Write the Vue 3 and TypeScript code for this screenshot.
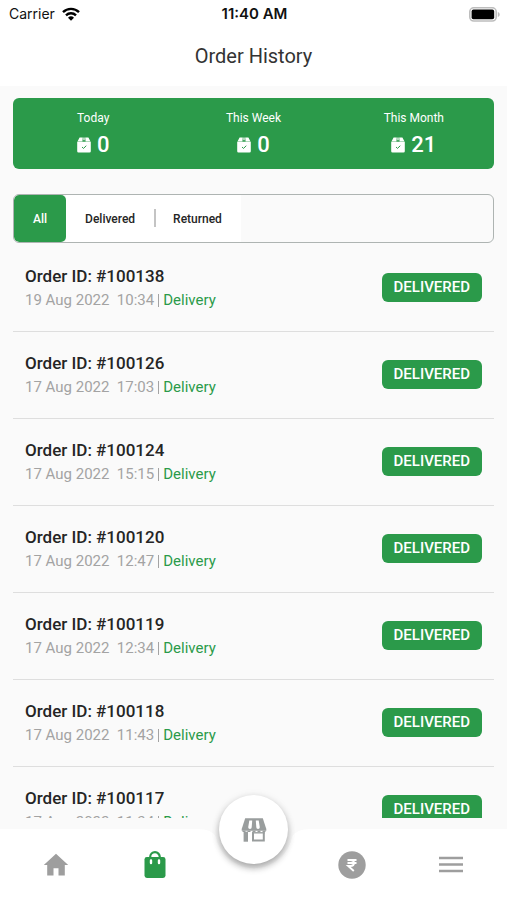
<script setup lang="ts">
import { ref, computed } from 'vue'

type Filter = 'All' | 'Delivered' | 'Returned'

interface Order {
  id: number
  date: string
  time: string
  status: Filter
}

const stats = [
  { label: 'Today', count: 0 },
  { label: 'This Week', count: 0 },
  { label: 'This Month', count: 21 },
]

const filters: Filter[] = ['All', 'Delivered', 'Returned']
const active = ref<Filter>('All')

const orders: Order[] = [
  { id: 100138, date: '19 Aug 2022', time: '10:34', status: 'Delivered' },
  { id: 100126, date: '17 Aug 2022', time: '17:03', status: 'Delivered' },
  { id: 100124, date: '17 Aug 2022', time: '15:15', status: 'Delivered' },
  { id: 100120, date: '17 Aug 2022', time: '12:47', status: 'Delivered' },
  { id: 100119, date: '17 Aug 2022', time: '12:34', status: 'Delivered' },
  { id: 100118, date: '17 Aug 2022', time: '11:43', status: 'Delivered' },
  { id: 100117, date: '17 Aug 2022', time: '11:34', status: 'Delivered' },
]

const visible = computed(() =>
  active.value === 'All' ? orders : orders.filter((o) => o.status === active.value),
)
</script>

<template>
  <div class="screen">
    <header class="top">
      <div class="status">
        <span class="carrier">
          Carrier
          <svg width="18" height="14" viewBox="0 0 18 14" fill="none" stroke="#000" stroke-width="2.4">
            <path d="M1 5.2a11.4 11.4 0 0 1 16 0" />
            <path d="M4 8.3a7.2 7.2 0 0 1 10 0" />
            <path d="M9 13.8 6 10.8a4.3 4.3 0 0 1 6 0z" fill="#000" stroke="none" />
          </svg>
        </span>
        <span class="clock">11:40 AM</span>
        <svg class="battery" width="31" height="15" viewBox="0 0 31 15">
          <rect x="0.8" y="0.8" width="26.4" height="13.2" rx="4" fill="#fff" stroke="#bdbdbd" stroke-width="1.6" />
          <rect x="2.6" y="2.6" width="22.6" height="9.6" rx="1.8" fill="#000" />
          <path d="M28.8 5v5c1.4-.5 1.9-1.5 1.9-2.500S30.200 5.500 28.800 5z" fill="#bdbdbd" />
        </svg>
      </div>
      <h1>Order History</h1>
    </header>

    <main>
      <section class="stats">
        <div v-for="s in stats" :key="s.label" class="stat">
          <span class="label">{{ s.label }}</span>
          <span class="count">
            <svg width="14" height="16" viewBox="0 0 14 16">
              <path d="M2.600.5h3.200l-.4 4H.5zM8.200.5h3.200l2.100 4H8.600z" fill="#fff" />
              <path d="M6.200.5h1.600v2.900l-.8-.5-.8.500z" fill="#fff" opacity=".8" />
              <path d="M.2 4.800h13.600v9.400a1.300 1.300 0 0 1-1.300 1.300h-11A1.300 1.300 0 0 1 .2 14.200z" fill="#fff" />
              <path d="m5 10 1.500 1.400L9.300 8.700" fill="none" stroke="#2b9a4a" stroke-width="1" />
            </svg>
            {{ s.count }}
          </span>
        </div>
      </section>

      <div class="filters">
        <button
          v-for="f in filters"
          :key="f"
          type="button"
          :class="{ on: f === active }"
          :aria-pressed="f === active"
          @click="active = f"
        >{{ f }}</button>
      </div>

      <ul class="orders">
        <li v-for="o in visible" :key="o.id">
          <div class="info">
            <strong>Order ID: #{{ o.id }}</strong>
            <span class="meta">
              <span>{{ o.date }}&nbsp; {{ o.time }}</span>
              <i class="bar"></i>
              <span class="kind">Delivery</span>
            </span>
          </div>
          <span class="badge">DELIVERED</span>
        </li>
      </ul>
    </main>

    <nav>
      <svg class="notch" width="120" height="40" viewBox="0 0 120 40" aria-hidden="true">
        <path d="M4 0Q18 0 21.800 8A39 39 0 0 0 98.200 8Q102 0 116 0z" fill="#fafafa" />
      </svg>
      <button type="button" aria-label="Home">
        <svg width="26" height="24" viewBox="0 0 26 24">
          <path d="M13 .8 25.200 12h-3.400v10.500h-6.300v-7.300h-5v7.300H4.200V12H.8z" fill="#9e9e9e" />
        </svg>
      </button>
      <button type="button" aria-label="Orders">
        <svg width="22" height="28" viewBox="0 0 22 28">
          <path d="M6.200 7.500V6a4.800 4.800 0 0 1 9.600 0v1.500" fill="none" stroke="#2b9a4a" stroke-width="2.200" />
          <rect x=".5" y="6" width="21" height="21" rx="2.400" fill="#2b9a4a" />
          <path d="M7 9.500v2.600M15 9.500v2.600" stroke="#fff" stroke-width="2.400" stroke-linecap="round" />
        </svg>
      </button>
      <span class="slot">
        <button type="button" class="fab" aria-label="Store">
          <svg width="26" height="24" viewBox="0 0 26 24">
            <path d="M4.200.3h17.600l3.500 10.700v1.700H.7V11z" fill="#999d9d" />
            <path d="M8.300 2.600h2.900l-.5 6.600a1.700 1.700 0 0 1-3.500 0zM14.800 2.600h2.900l1.100 6.600a1.700 1.700 0 0 1-3.500 0z" fill="#fff" />
            <path d="M1.500 12.700h3v1.200h-3zM6.500 12.700h3v1.200h-3zM11.500 12.700h3v1.200h-3zM16.500 12.700h3v1.200h-3zM21.500 12.700h3v1.200h-3z" fill="#999d9d" />
            <path d="M2.600 13.700H7V23.700H2.600z" fill="#999d9d" />
            <path d="M12 14.200v8.400h10.800v-8.400" fill="none" stroke="#999d9d" stroke-width="2" />
            <path d="M11 14.800h12.800" stroke="#999d9d" stroke-width="1.400" />
          </svg>
        </button>
      </span>
      <button type="button" aria-label="Earnings">
        <svg width="28" height="28" viewBox="0 0 28 28">
          <circle cx="14" cy="14" r="13.700" fill="#9e9e9e" />
          <path d="M9.500 9h9M9.500 12h9M10 9h2.500c4.600 0 4.600 6 0 6h-2.300l5.600 5" fill="none" stroke="#fff" stroke-width="1.900" />
        </svg>
      </button>
      <button type="button" aria-label="Menu">
        <svg width="24" height="17" viewBox="0 0 24 17">
          <path d="M0 2h24M0 8.500h24M0 15h24" stroke="#9e9e9e" stroke-width="2.400" />
        </svg>
      </button>
    </nav>
  </div>
</template>

<style>
body {
  margin: 0;
}
</style>

<style scoped>
.screen {
  height: 100vh;
  display: flex;
  flex-direction: column;
  overflow: hidden;
  background: #fafafa;
  color: #252525;
  font-family: Roboto, "Liberation Sans", sans-serif;
}
svg {
  display: block;
  flex: none;
}
button {
  border: 0;
  padding: 0;
  background: none;
  font: inherit;
  color: inherit;
}
.top {
  flex: none;
  height: 86px;
  background: #fff;
}
.status {
  display: grid;
  grid-template-columns: 1fr auto 1fr;
  align-items: center;
  height: 28px;
  padding: 0 7px 0 9px;
  color: #111;
  font: 14px/20px Inter, sans-serif;
}
.carrier {
  display: flex;
  align-items: center;
  gap: 7px;
}
.clock {
  font-size: 15px;
  font-weight: 600;
}
.battery {
  justify-self: end;
}
h1 {
  margin: 0;
  text-align: center;
  font-size: 20px;
  line-height: 56px;
  font-weight: 400;
  color: #333;
}
main {
  flex: 1;
  min-height: 0;
  display: flex;
  flex-direction: column;
  padding: 12px 13px 11px;
}
.stats {
  flex: none;
  display: grid;
  grid-template-columns: repeat(3, 1fr);
  height: 71px;
  border-radius: 6px;
  background: #2b9a4a;
  color: #fff;
}
.stat {
  display: flex;
  flex-direction: column;
  align-items: center;
  padding-top: 12px;
}
.label {
  font-size: 12px;
  line-height: 16px;
}
.count {
  display: flex;
  align-items: center;
  gap: 6px;
  margin-top: 5px;
  font-size: 22px;
  line-height: 28px;
  font-weight: 500;
}
.filters {
  flex: none;
  display: flex;
  height: 47px;
  margin-top: 25px;
  border: 1px solid #aeb4b2;
  border-radius: 6px;
  overflow: hidden;
  font-size: 12px;
  font-weight: 500;
}
.filters button {
  position: relative;
  padding: 0 19px;
  background: #fff;
}
.filters button + button + button::before {
  content: "";
  position: absolute;
  left: 0;
  top: 14px;
  width: 2px;
  height: 18px;
  background: #c4c4c4;
}
.filters .on {
  border-radius: 5px;
  background: #2b9a4a;
  color: #fff;
}
.orders {
  flex: 1;
  min-height: 0;
  margin: 2px 0 0;
  padding: 0;
  overflow: hidden;
  list-style: none;
}
li {
  box-sizing: border-box;
  height: 87px;
  display: flex;
  align-items: center;
  justify-content: space-between;
  padding: 0 12px 2px;
  border-bottom: 1px solid #dedede;
}
.info {
  display: flex;
  flex-direction: column;
  gap: 2px;
}
strong {
  font-size: 17px;
  line-height: 24px;
  font-weight: 500;
}
.meta {
  display: flex;
  align-items: center;
  gap: 4px;
  font-size: 15px;
  line-height: 20px;
  color: #a3a3a3;
}
.bar {
  width: 1px;
  height: 13px;
  background: #a3a3a3;
}
.kind {
  color: #2b9a4a;
}
.badge {
  padding: 0 12px;
  border-radius: 6px;
  background: #2b9a4a;
  color: #fff;
  font-size: 15px;
  line-height: 29px;
  font-weight: 500;
}
nav {
  position: relative;
  flex: none;
  display: grid;
  grid-template-columns: repeat(5, 1fr);
  height: 71px;
  box-sizing: border-box;
  padding: 0 7px;
  background: #fff;
}
nav button {
  display: flex;
  align-items: center;
  justify-content: center;
}
.notch {
  position: absolute;
  top: 0;
  left: calc(50% - 60px);
}
.slot {
  position: relative;
}
nav .fab {
  position: absolute;
  top: -34px;
  left: calc(50% - 34px);
  width: 69px;
  height: 69px;
  border-radius: 50%;
  background: #fff;
  box-shadow: 0 4px 7px rgba(0, 0, 0, 0.3), 0 1px 10px rgba(0, 0, 0, 0.08);
}
</style>
